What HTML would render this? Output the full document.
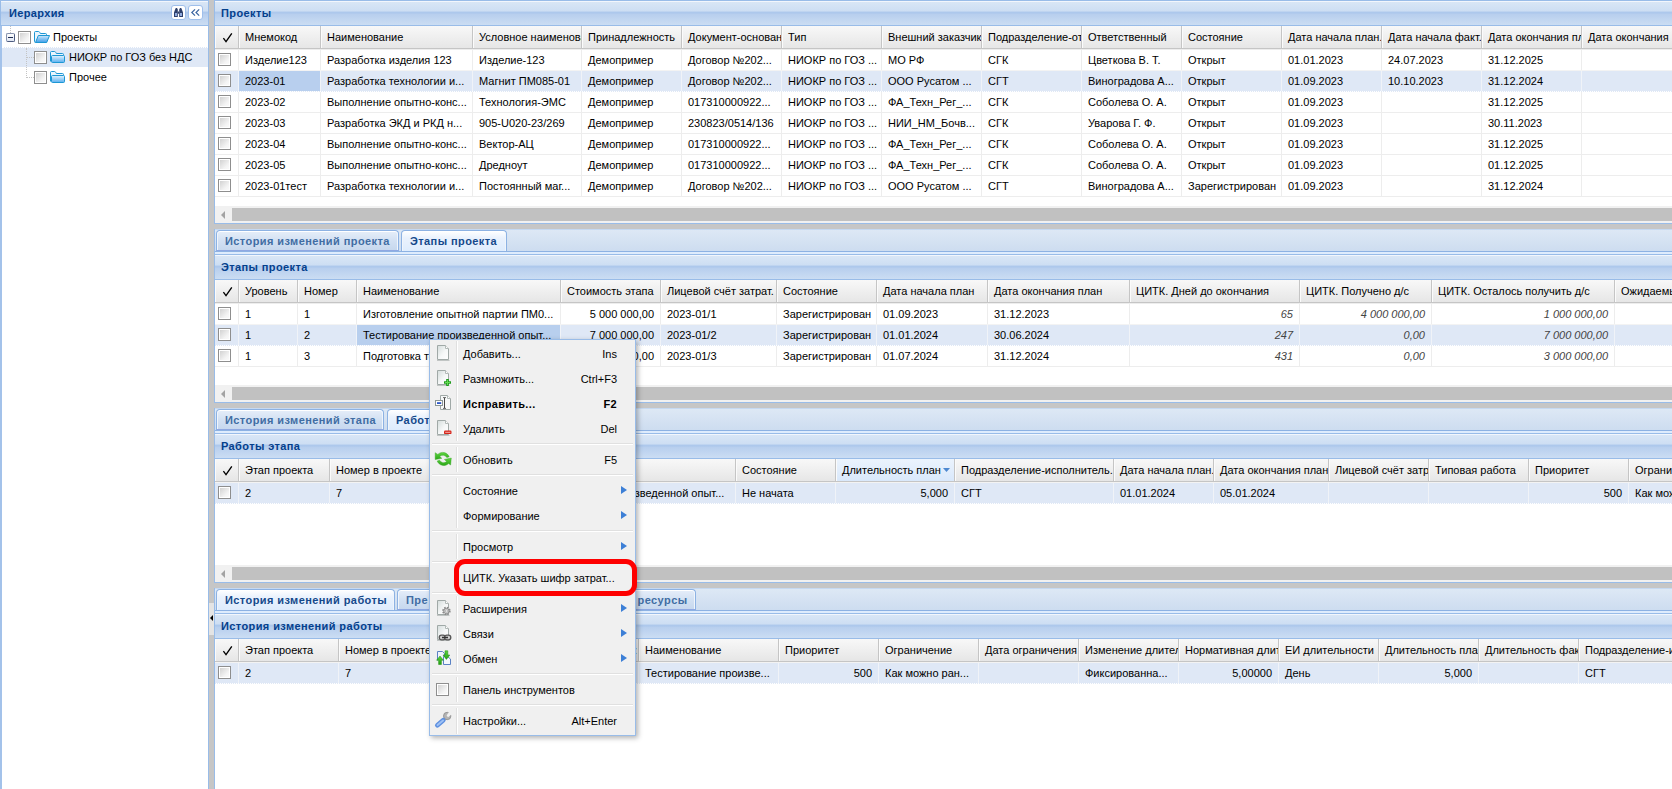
<!DOCTYPE html>
<html><head><meta charset="utf-8"><title>UI</title>
<style>
*{box-sizing:border-box;margin:0;padding:0}
html,body{width:1672px;height:789px;overflow:hidden;background:#fff}
body{font-family:"Liberation Sans",sans-serif;font-size:11px;color:#000;position:relative;line-height:13px}
.abs{position:absolute}
svg{position:absolute;overflow:visible}
.ph{position:absolute;height:26px;border:1px solid #99bce8;background:linear-gradient(#dae7f6 0,#cddef3 42%,#adc8ec 46%,#adc8ec 50%,#b8cfee 56%,#cbddf3 100%);box-shadow:inset 0 1px 0 #f2f6fc}
.ph span{position:absolute;left:6px;top:6px;font-weight:bold;color:#04408c;letter-spacing:.4px;white-space:nowrap}
.gh{position:absolute;height:23px;background:linear-gradient(#f8f8f8,#e6e6e6);border-bottom:1px solid #c5c5c5;overflow:hidden;white-space:nowrap}
.gh i{position:absolute;top:0;height:22px;border-right:1px solid #c5c5c5;border-left:1px solid #fbfbfb;font-style:normal;padding:5px 0 0 5px;overflow:hidden;white-space:nowrap}
.gh i.srt{background:linear-gradient(#ebf3fd,#d9e8fb)}
.gh svg{left:7px;top:7px}
.row{position:absolute;height:21px;border-top:1px solid #ededed;background:#fff;overflow:hidden}
.row.sel{background:#dfe8f6;border-top-color:#f3f3f3}
.row.aft{border-top:1px dotted #dfe8f6}
.row b{position:absolute;top:0;height:20px;font-weight:normal;padding:4px 6px 0 6px;overflow:hidden;white-space:nowrap;border-right:1px solid #ededed}
.row.sel b{border-right-color:#f0f3f8}
.row b.r{text-align:right}
.row b.it{font-style:italic;color:#444}
.row b.foc{background:#b8cfee}
.cb{position:absolute;left:3px;top:3px;width:13px;height:13px;border:1px solid #8e8e8e;background:#fff}
.cb:after{content:"";position:absolute;left:1px;top:1px;width:9px;height:9px;background:linear-gradient(135deg,#d2d2d2,#f4f4f4 70%,#fafafa)}
.sb{position:absolute;height:17px;background:#f1f1f1}
.sb u{position:absolute;left:17px;top:2px;height:13px;right:0;background:#c1c1c1}
.sb s{position:absolute;left:6px;top:5px;width:0;height:0;border:4px solid transparent;border-right:4.5px solid #a3a3a3;border-left:0}
.tb{position:absolute;height:26px;border:1px solid #99bce8;border-left:0;border-right:0;border-top-color:#c5d9f2;background:linear-gradient(#dde8f5,#cbdbef)}
.tb .strip{position:absolute;left:0;right:0;bottom:0;height:3px;background:#deecfd;border-top:1px solid #8db2e3}
.tab{position:absolute;top:0;height:21px;border:1px solid #8db2e3;border-bottom-color:#8fa8e2;border-radius:4px 4px 0 0;background:linear-gradient(#e6eef9,#d3e1f3 50%,#c7d8ee);color:#416da3;font-weight:bold;letter-spacing:.42px;padding:4px 0 0 8px;white-space:nowrap;overflow:hidden;box-shadow:inset 0 1px 0 #fff,inset 1px 0 0 #f0f5fb,inset -1px 0 0 #f0f5fb}
.tab.act{background:linear-gradient(#fff,#eaf2fd 35%,#deecfd);color:#15498b;border-bottom:0;z-index:2}
.hs{position:absolute;height:5px;background:#c6c6c6}
/* menu */
.menu{position:absolute;left:429px;top:339px;width:207px;height:397px;background:#f0f0f0;border:1px solid #99bce8;box-shadow:2px 2px 5px rgba(0,0,0,.3);z-index:10}
.menu .vl{position:absolute;left:26px;top:1px;bottom:1px;width:2px;border-left:1px solid #e0e0e0;background:#fff}
.mi{position:absolute;left:1px;width:203px;height:25px}
.mi span{position:absolute;left:32px;top:7px;white-space:nowrap}
.mi em{position:absolute;right:17px;top:7px;font-style:normal;white-space:nowrap}
.mi.b span,.mi.b em{font-weight:bold;letter-spacing:.35px}
.mi .ar{position:absolute;left:190px;top:8px;width:0;height:0;border:4.5px solid transparent;border-left:6px solid #3d7fd6;border-right:0}
.ms{position:absolute;left:1px;width:203px;height:6px;background:#f0f0f0}
.ms:after{content:"";position:absolute;left:1px;right:1px;top:2px;height:1px;border-top:1px solid #e0e0e0;background:#fff}
</style></head>
<body>
<div class="abs" style="left:0;top:0;width:209px;height:800px;border:1px solid #99bce8;border-left:2px solid #a3c2ea;border-top:0;background:#fff"></div>
<div class="ph" style="left:0;top:0;width:209px"><span style="left:8px;letter-spacing:.35px">Иерархия</span></div>
<div class="abs" style="left:171px;top:5px;width:15px;height:15px;border:1px solid #9fbfeb;border-radius:3px;background:#fff"><svg style="left:2px;top:2px" width="9" height="9" viewBox="0 0 9 9"><path d="M0 9 V4.5 L1.2 1.2 L1.8 0 H3 L3.8 1.5 V9 Z M5.2 9 V1.5 L6 0 H7.2 L7.8 1.2 L9 4.5 V9 Z" fill="#2d3f6b"/><path d="M1 5 H3 V8 H1 Z M6 5 H8 V8 H6 Z" fill="#8fa9dc"/><rect x="3.8" y="3.5" width="1.4" height="2.2" fill="#2d3f6b"/></svg></div>
<div class="abs" style="left:188px;top:5px;width:15px;height:15px;border:1px solid #9fbfeb;border-radius:3px;background:#fff"><svg style="left:2px;top:3px" width="9" height="7" viewBox="0 0 9 7"><path d="M4 0.3 L0.8 3.5 L4 6.7 M8.2 0.3 L5 3.5 L8.2 6.7" fill="none" stroke="#3a64a0" stroke-width="1.2"/></svg></div>
<div class="abs" style="left:2px;top:47px;width:206px;height:20px;background:#dfe8f6;border-top:1px dotted #fff"></div>
<div class="abs" style="left:10px;top:26px;width:1px;height:7px;border-left:1px dotted #c4c4c4"></div>
<div class="abs" style="left:26px;top:48px;width:1px;height:30px;border-left:1px dotted #c4c4c4"></div>
<div class="abs" style="left:27px;top:57px;width:7px;height:1px;border-top:1px dotted #c4c4c4"></div>
<div class="abs" style="left:27px;top:77px;width:7px;height:1px;border-top:1px dotted #c4c4c4"></div>
<div class="abs" style="left:6px;top:33px;width:9px;height:9px;border:1px solid #8592ad;border-right-color:#4d5c80;border-bottom-color:#4d5c80;border-radius:2px;background:linear-gradient(#fff,#dfe6f2)"><div class="abs" style="left:1px;top:3px;width:5px;height:1px;background:#1f2c52"></div></div>
<div class="cb" style="left:18px;top:31px"></div><svg style="left:34px;top:29px" width="16" height="16" viewBox="0 0 16 16"><defs><linearGradient id="fo" x1="0" y1="0" x2="0" y2="1"><stop offset="0" stop-color="#cfe8fb"/><stop offset="1" stop-color="#3d9de9"/></linearGradient></defs><path d="M1.5 13.5 Q0.5 13.5 0.5 12.5 V3.5 Q0.5 2.5 1.5 2.5 H4.5 Q5.3 2.5 5.8 3.5 L6.3 4.5 H11.5 Q12.5 4.5 12.5 5.5 V6.5" fill="#eaf5fd" stroke="#1c97d4"/><path d="M1.5 13.5 L4.3 6.5 H15.5 L12.7 13.5 Z" fill="url(#fo)" stroke="#1c97d4" stroke-linejoin="round"/></svg><div class="abs" style="left:53px;top:31px">Проекты</div>
<div class="cb" style="left:34px;top:51px"></div><svg style="left:50px;top:49px" width="16" height="16" viewBox="0 0 16 16"><defs><linearGradient id="f1" x1="0" y1="0" x2="0" y2="1"><stop offset="0" stop-color="#e6f3fd"/><stop offset="1" stop-color="#58aff0"/></linearGradient></defs><path d="M0.5 12.5 V3.5 Q0.5 2.5 1.5 2.5 H4.5 Q5.3 2.5 5.8 3.5 L6.3 4.5 H12.5 Q13.5 4.5 13.5 5.5 V6.5" fill="#eaf5fd" stroke="#1c97d4"/><rect x="1.5" y="6.5" width="13" height="7" rx="1" fill="url(#f1)" stroke="#1c97d4"/></svg><div class="abs" style="left:69px;top:51px">НИОКР по ГОЗ без НДС</div>
<div class="cb" style="left:34px;top:71px"></div><svg style="left:50px;top:69px" width="16" height="16" viewBox="0 0 16 16"><defs><linearGradient id="f2" x1="0" y1="0" x2="0" y2="1"><stop offset="0" stop-color="#e6f3fd"/><stop offset="1" stop-color="#58aff0"/></linearGradient></defs><path d="M0.5 12.5 V3.5 Q0.5 2.5 1.5 2.5 H4.5 Q5.3 2.5 5.8 3.5 L6.3 4.5 H12.5 Q13.5 4.5 13.5 5.5 V6.5" fill="#eaf5fd" stroke="#1c97d4"/><rect x="1.5" y="6.5" width="13" height="7" rx="1" fill="url(#f2)" stroke="#1c97d4"/></svg><div class="abs" style="left:69px;top:71px">Прочее</div>
<div class="abs" style="left:209px;top:0;width:5px;height:789px;background:#c6c6c6"></div>
<div class="abs" style="left:209px;top:603px;width:5px;height:32px;background:#e4e4e4"></div>
<div class="abs" style="left:210px;top:615px;width:0;height:0;border:3px solid transparent;border-right:3px solid #000;border-left:0"></div>
<div class="abs" style="left:214px;top:0;width:1px;height:789px;background:#99bce8"></div>
<div class="ph" style="left:214px;top:0px;width:1459px"><span>Проекты</span></div>
<div class="gh" style="left:215px;top:26px;width:1457px"><i class="" style="left:0px;width:24px"><svg width="10" height="10" viewBox="0 0 10 10"><path d="M0.4 5.2 L3 8.6 L8.8 0.4" fill="none" stroke="#000" stroke-width="1.35"/></svg></i><i class="" style="left:24px;width:82px">Мнемокод</i><i class="" style="left:106px;width:152px">Наименование</i><i class="" style="left:258px;width:109px">Условное наименование</i><i class="" style="left:367px;width:100px">Принадлежность</i><i class="" style="left:467px;width:100px">Документ-основание</i><i class="" style="left:567px;width:100px">Тип</i><i class="" style="left:667px;width:100px">Внешний заказчик</i><i class="" style="left:767px;width:100px">Подразделение-ответственный</i><i class="" style="left:867px;width:100px">Ответственный</i><i class="" style="left:967px;width:100px">Состояние</i><i class="" style="left:1067px;width:100px">Дата начала план.</i><i class="" style="left:1167px;width:100px">Дата начала факт.</i><i class="" style="left:1267px;width:100px">Дата окончания план.</i><i class="" style="left:1367px;width:100px">Дата окончания</i></div>
<div class="row " style="left:215px;top:49px;width:1457px"><span class="cb"></span><b style="left:0px;width:24px"></b><b class="" style="left:24px;width:82px">Изделие123</b><b class="" style="left:106px;width:152px">Разработка изделия 123</b><b class="" style="left:258px;width:109px">Изделие-123</b><b class="" style="left:367px;width:100px">Демопример</b><b class="" style="left:467px;width:100px">Договор №202...</b><b class="" style="left:567px;width:100px">НИОКР по ГОЗ ...</b><b class="" style="left:667px;width:100px">МО РФ</b><b class="" style="left:767px;width:100px">СГК</b><b class="" style="left:867px;width:100px">Цветкова В. Т.</b><b class="" style="left:967px;width:100px">Открыт</b><b class="" style="left:1067px;width:100px">01.01.2023</b><b class="" style="left:1167px;width:100px">24.07.2023</b><b class="" style="left:1267px;width:100px">31.12.2025</b><b class="" style="left:1367px;width:100px"></b></div>
<div class="row sel" style="left:215px;top:70px;width:1457px"><span class="cb"></span><b style="left:0px;width:24px"></b><b class="foc" style="left:24px;width:82px">2023-01</b><b class="" style="left:106px;width:152px">Разработка технологии и...</b><b class="" style="left:258px;width:109px">Магнит ПМ085-01</b><b class="" style="left:367px;width:100px">Демопример</b><b class="" style="left:467px;width:100px">Договор №202...</b><b class="" style="left:567px;width:100px">НИОКР по ГОЗ ...</b><b class="" style="left:667px;width:100px">ООО Русатом ...</b><b class="" style="left:767px;width:100px">СГТ</b><b class="" style="left:867px;width:100px">Виноградова А...</b><b class="" style="left:967px;width:100px">Открыт</b><b class="" style="left:1067px;width:100px">01.09.2023</b><b class="" style="left:1167px;width:100px">10.10.2023</b><b class="" style="left:1267px;width:100px">31.12.2024</b><b class="" style="left:1367px;width:100px"></b></div>
<div class="row aft" style="left:215px;top:91px;width:1457px"><span class="cb"></span><b style="left:0px;width:24px"></b><b class="" style="left:24px;width:82px">2023-02</b><b class="" style="left:106px;width:152px">Выполнение опытно-конс...</b><b class="" style="left:258px;width:109px">Технология-ЭМС</b><b class="" style="left:367px;width:100px">Демопример</b><b class="" style="left:467px;width:100px">017310000922...</b><b class="" style="left:567px;width:100px">НИОКР по ГОЗ ...</b><b class="" style="left:667px;width:100px">ФА_Техн_Рег_...</b><b class="" style="left:767px;width:100px">СГК</b><b class="" style="left:867px;width:100px">Соболева О. А.</b><b class="" style="left:967px;width:100px">Открыт</b><b class="" style="left:1067px;width:100px">01.09.2023</b><b class="" style="left:1167px;width:100px"></b><b class="" style="left:1267px;width:100px">31.12.2025</b><b class="" style="left:1367px;width:100px"></b></div>
<div class="row " style="left:215px;top:112px;width:1457px"><span class="cb"></span><b style="left:0px;width:24px"></b><b class="" style="left:24px;width:82px">2023-03</b><b class="" style="left:106px;width:152px">Разработка ЭКД и РКД н...</b><b class="" style="left:258px;width:109px">905-U020-23/269</b><b class="" style="left:367px;width:100px">Демопример</b><b class="" style="left:467px;width:100px">230823/0514/136</b><b class="" style="left:567px;width:100px">НИОКР по ГОЗ ...</b><b class="" style="left:667px;width:100px">НИИ_НМ_Бочв...</b><b class="" style="left:767px;width:100px">СГК</b><b class="" style="left:867px;width:100px">Уварова Г. Ф.</b><b class="" style="left:967px;width:100px">Открыт</b><b class="" style="left:1067px;width:100px">01.09.2023</b><b class="" style="left:1167px;width:100px"></b><b class="" style="left:1267px;width:100px">30.11.2023</b><b class="" style="left:1367px;width:100px"></b></div>
<div class="row " style="left:215px;top:133px;width:1457px"><span class="cb"></span><b style="left:0px;width:24px"></b><b class="" style="left:24px;width:82px">2023-04</b><b class="" style="left:106px;width:152px">Выполнение опытно-конс...</b><b class="" style="left:258px;width:109px">Вектор-АЦ</b><b class="" style="left:367px;width:100px">Демопример</b><b class="" style="left:467px;width:100px">017310000922...</b><b class="" style="left:567px;width:100px">НИОКР по ГОЗ ...</b><b class="" style="left:667px;width:100px">ФА_Техн_Рег_...</b><b class="" style="left:767px;width:100px">СГК</b><b class="" style="left:867px;width:100px">Соболева О. А.</b><b class="" style="left:967px;width:100px">Открыт</b><b class="" style="left:1067px;width:100px">01.09.2023</b><b class="" style="left:1167px;width:100px"></b><b class="" style="left:1267px;width:100px">31.12.2025</b><b class="" style="left:1367px;width:100px"></b></div>
<div class="row " style="left:215px;top:154px;width:1457px"><span class="cb"></span><b style="left:0px;width:24px"></b><b class="" style="left:24px;width:82px">2023-05</b><b class="" style="left:106px;width:152px">Выполнение опытно-конс...</b><b class="" style="left:258px;width:109px">Дредноут</b><b class="" style="left:367px;width:100px">Демопример</b><b class="" style="left:467px;width:100px">017310000922...</b><b class="" style="left:567px;width:100px">НИОКР по ГОЗ ...</b><b class="" style="left:667px;width:100px">ФА_Техн_Рег_...</b><b class="" style="left:767px;width:100px">СГК</b><b class="" style="left:867px;width:100px">Соболева О. А.</b><b class="" style="left:967px;width:100px">Открыт</b><b class="" style="left:1067px;width:100px">01.09.2023</b><b class="" style="left:1167px;width:100px"></b><b class="" style="left:1267px;width:100px">01.12.2025</b><b class="" style="left:1367px;width:100px"></b></div>
<div class="row " style="left:215px;top:175px;width:1457px"><span class="cb"></span><b style="left:0px;width:24px"></b><b class="" style="left:24px;width:82px">2023-01тест</b><b class="" style="left:106px;width:152px">Разработка технологии и...</b><b class="" style="left:258px;width:109px">Постоянный маг...</b><b class="" style="left:367px;width:100px">Демопример</b><b class="" style="left:467px;width:100px">Договор №202...</b><b class="" style="left:567px;width:100px">НИОКР по ГОЗ ...</b><b class="" style="left:667px;width:100px">ООО Русатом ...</b><b class="" style="left:767px;width:100px">СГТ</b><b class="" style="left:867px;width:100px">Виноградова А...</b><b class="" style="left:967px;width:100px">Зарегистрирован</b><b class="" style="left:1067px;width:100px">01.09.2023</b><b class="" style="left:1167px;width:100px"></b><b class="" style="left:1267px;width:100px">31.12.2024</b><b class="" style="left:1367px;width:100px"></b></div>
<div class="abs" style="left:215px;top:196px;width:1457px;height:1px;background:#ededed"></div>
<div class="sb" style="left:215px;top:206px;width:1457px"><s></s><u></u></div>
<div class="abs" style="left:214px;top:223px;width:1458px;height:1px;background:#99bce8"></div>
<div class="hs" style="left:214px;top:224px;width:1458px"></div>
<div class="tb" style="left:215px;top:229px;width:1457px"><div class="strip"></div><div class="tab" style="left:1px;width:183px">История изменений проекта</div><div class="tab act" style="left:186px;width:106px">Этапы проекта</div></div>
<div class="ph" style="left:214px;top:254px;width:1459px"><span>Этапы проекта</span></div>
<div class="gh" style="left:215px;top:280px;width:1457px"><i class="" style="left:0px;width:24px"><svg width="10" height="10" viewBox="0 0 10 10"><path d="M0.4 5.2 L3 8.6 L8.8 0.4" fill="none" stroke="#000" stroke-width="1.35"/></svg></i><i class="" style="left:24px;width:59px">Уровень</i><i class="" style="left:83px;width:59px">Номер</i><i class="" style="left:142px;width:204px">Наименование</i><i class="" style="left:346px;width:100px">Стоимость этапа</i><i class="" style="left:446px;width:116px">Лицевой счёт затрат.</i><i class="" style="left:562px;width:100px">Состояние</i><i class="" style="left:662px;width:111px">Дата начала план</i><i class="" style="left:773px;width:142px">Дата окончания план</i><i class="" style="left:915px;width:170px">ЦИТК. Дней до окончания</i><i class="" style="left:1085px;width:132px">ЦИТК. Получено д/с</i><i class="" style="left:1217px;width:183px">ЦИТК. Осталось получить д/с</i><i class="" style="left:1400px;width:100px">Ожидаемые</i></div>
<div class="row " style="left:215px;top:303px;width:1457px"><span class="cb"></span><b style="left:0px;width:24px"></b><b class="" style="left:24px;width:59px">1</b><b class="" style="left:83px;width:59px">1</b><b class="" style="left:142px;width:204px">Изготовление опытной партии ПМ0...</b><b class="r" style="left:346px;width:100px">5 000 000,00</b><b class="" style="left:446px;width:116px">2023-01/1</b><b class="" style="left:562px;width:100px">Зарегистрирован</b><b class="" style="left:662px;width:111px">01.09.2023</b><b class="" style="left:773px;width:142px">31.12.2023</b><b class="r it" style="left:915px;width:170px">65</b><b class="r it" style="left:1085px;width:132px">4 000 000,00</b><b class="r it" style="left:1217px;width:183px">1 000 000,00</b><b class="" style="left:1400px;width:100px"></b></div>
<div class="row sel" style="left:215px;top:324px;width:1457px"><span class="cb"></span><b style="left:0px;width:24px"></b><b class="" style="left:24px;width:59px">1</b><b class="" style="left:83px;width:59px">2</b><b class="foc" style="left:142px;width:204px">Тестирование произведенной опыт...</b><b class="r" style="left:346px;width:100px">7 000 000,00</b><b class="" style="left:446px;width:116px">2023-01/2</b><b class="" style="left:562px;width:100px">Зарегистрирован</b><b class="" style="left:662px;width:111px">01.01.2024</b><b class="" style="left:773px;width:142px">30.06.2024</b><b class="r it" style="left:915px;width:170px">247</b><b class="r it" style="left:1085px;width:132px">0,00</b><b class="r it" style="left:1217px;width:183px">7 000 000,00</b><b class="" style="left:1400px;width:100px"></b></div>
<div class="row aft" style="left:215px;top:345px;width:1457px"><span class="cb"></span><b style="left:0px;width:24px"></b><b class="" style="left:24px;width:59px">1</b><b class="" style="left:83px;width:59px">3</b><b class="" style="left:142px;width:204px">Подготовка технической документа...</b><b class="r" style="left:346px;width:100px">3 000 000,00</b><b class="" style="left:446px;width:116px">2023-01/3</b><b class="" style="left:562px;width:100px">Зарегистрирован</b><b class="" style="left:662px;width:111px">01.07.2024</b><b class="" style="left:773px;width:142px">31.12.2024</b><b class="r it" style="left:915px;width:170px">431</b><b class="r it" style="left:1085px;width:132px">0,00</b><b class="r it" style="left:1217px;width:183px">3 000 000,00</b><b class="" style="left:1400px;width:100px"></b></div>
<div class="abs" style="left:215px;top:366px;width:1457px;height:1px;background:#ededed"></div>
<div class="sb" style="left:215px;top:385px;width:1457px"><s></s><u></u></div>
<div class="abs" style="left:214px;top:402px;width:1458px;height:1px;background:#99bce8"></div>
<div class="hs" style="left:214px;top:403px;width:1458px"></div>
<div class="tb" style="left:215px;top:408px;width:1457px"><div class="strip"></div><div class="tab" style="left:1px;width:168px">История изменений этапа</div><div class="tab act" style="left:172px;width:100px">Работы этапа</div></div>
<div class="ph" style="left:214px;top:433px;width:1459px"><span>Работы этапа</span></div>
<div class="gh" style="left:215px;top:459px;width:1457px"><i class="" style="left:0px;width:24px"><svg width="10" height="10" viewBox="0 0 10 10"><path d="M0.4 5.2 L3 8.6 L8.8 0.4" fill="none" stroke="#000" stroke-width="1.35"/></svg></i><i class="" style="left:24px;width:91px">Этап проекта</i><i class="" style="left:115px;width:100px">Номер в проекте</i><i class="" style="left:215px;width:100px"></i><i class="" style="left:315px;width:206px">Наименование</i><i class="" style="left:521px;width:100px">Состояние</i><i class="srt" style="left:621px;width:119px">Длительность план<svg style="left:106px;top:9px" width="7" height="4" viewBox="0 0 7 4"><path d="M0 0 H7 L3.5 4 Z" fill="#4d88d0"/></svg></i><i class="" style="left:740px;width:159px">Подразделение-исполнитель..</i><i class="" style="left:899px;width:100px">Дата начала план.</i><i class="" style="left:999px;width:115px">Дата окончания план</i><i class="" style="left:1114px;width:100px">Лицевой счёт затрат</i><i class="" style="left:1214px;width:100px">Типовая работа</i><i class="" style="left:1314px;width:100px">Приоритет</i><i class="" style="left:1414px;width:100px">Ограничение</i></div>
<div class="row sel" style="left:215px;top:482px;width:1457px"><span class="cb"></span><b style="left:0px;width:24px"></b><b class="" style="left:24px;width:91px">2</b><b class="" style="left:115px;width:100px">7</b><b class="" style="left:215px;width:100px"></b><b class="" style="left:315px;width:206px">Тестирование произведенной опыт...</b><b class="" style="left:521px;width:100px">Не начата</b><b class="r" style="left:621px;width:119px">5,000</b><b class="" style="left:740px;width:159px">СГТ</b><b class="" style="left:899px;width:100px">01.01.2024</b><b class="" style="left:999px;width:115px">05.01.2024</b><b class="" style="left:1114px;width:100px"></b><b class="" style="left:1214px;width:100px"></b><b class="r" style="left:1314px;width:100px">500</b><b class="" style="left:1414px;width:100px">Как можно</b></div>
<div class="abs" style="left:215px;top:503px;width:1457px;height:1px;border-top:1px dotted #dfe8f6"></div>
<div class="sb" style="left:215px;top:565px;width:1457px"><s></s><u></u></div>
<div class="abs" style="left:214px;top:582px;width:1458px;height:1px;background:#99bce8"></div>
<div class="hs" style="left:214px;top:583px;width:1458px"></div>
<div class="tb" style="left:215px;top:588px;width:1457px"><div class="strip"></div><div class="tab act" style="left:1px;width:179px">История изменений работы</div><div class="tab" style="left:182px;width:120px">Пре</div><div class="tab" style="left:352px;width:129px">Трудовые ресурсы</div></div>
<div class="ph" style="left:214px;top:613px;width:1459px"><span>История изменений работы</span></div>
<div class="gh" style="left:215px;top:639px;width:1457px"><i class="" style="left:0px;width:24px"><svg width="10" height="10" viewBox="0 0 10 10"><path d="M0.4 5.2 L3 8.6 L8.8 0.4" fill="none" stroke="#000" stroke-width="1.35"/></svg></i><i class="" style="left:24px;width:100px">Этап проекта</i><i class="" style="left:124px;width:100px">Номер в проекте</i><i class="" style="left:224px;width:200px"></i><i class="" style="left:424px;width:140px">Наименование</i><i class="" style="left:564px;width:100px">Приоритет</i><i class="" style="left:664px;width:100px">Ограничение</i><i class="" style="left:764px;width:100px">Дата ограничения</i><i class="" style="left:864px;width:100px">Изменение длительности</i><i class="" style="left:964px;width:100px">Нормативная длительность</i><i class="" style="left:1064px;width:100px">ЕИ длительности</i><i class="" style="left:1164px;width:100px">Длительность план</i><i class="" style="left:1264px;width:100px">Длительность факт</i><i class="" style="left:1364px;width:100px">Подразделение-исполнитель</i></div>
<div class="abs" style="left:634px;top:644px">:</div>
<div class="row sel" style="left:215px;top:662px;width:1457px"><span class="cb"></span><b style="left:0px;width:24px"></b><b class="" style="left:24px;width:100px">2</b><b class="" style="left:124px;width:100px">7</b><b class="" style="left:224px;width:200px"></b><b class="" style="left:424px;width:140px">Тестирование произве...</b><b class="r" style="left:564px;width:100px">500</b><b class="" style="left:664px;width:100px">Как можно ран...</b><b class="" style="left:764px;width:100px"></b><b class="" style="left:864px;width:100px">Фиксированна...</b><b class="r" style="left:964px;width:100px">5,00000</b><b class="" style="left:1064px;width:100px">День</b><b class="r" style="left:1164px;width:100px">5,000</b><b class="" style="left:1264px;width:100px"></b><b class="" style="left:1364px;width:100px">СГТ</b></div>
<div class="abs" style="left:215px;top:683px;width:1457px;height:1px;border-top:1px dotted #dfe8f6"></div>
<div class="menu"><div class="vl"></div><div class="mi " style="top:1px"><svg style="left:6px;top:4px" width="16" height="16" viewBox="0 0 16 16"><defs><linearGradient id="pg1" x1="0" y1="0" x2="1" y2="1"><stop offset="0" stop-color="#d4dcdb"/><stop offset=".55" stop-color="#f6f8f8"/><stop offset="1" stop-color="#fff"/></linearGradient></defs><path d="M0 15.5 H12.5" stroke="#9aa3a1" stroke-opacity=".55" stroke-width="1"/><path d="M0.5 0.5 H8.5 L11.5 3.5 V14.5 H0.5 Z" fill="url(#pg1)" stroke="#a0a9a7"/><path d="M8.5 0.5 V3.5 H11.5" fill="#fff" stroke="#b3bab8"/></svg><span>Добавить...</span><em>Ins</em></div><div class="mi " style="top:26px"><svg style="left:6px;top:4px" width="16" height="16" viewBox="0 0 16 16"><defs><linearGradient id="pg2" x1="0" y1="0" x2="1" y2="1"><stop offset="0" stop-color="#d4dcdb"/><stop offset=".55" stop-color="#f6f8f8"/><stop offset="1" stop-color="#fff"/></linearGradient></defs><path d="M0 15.5 H12.5" stroke="#9aa3a1" stroke-opacity=".55" stroke-width="1"/><path d="M0.5 0.5 H8.5 L11.5 3.5 V14.5 H0.5 Z" fill="url(#pg2)" stroke="#a0a9a7"/><path d="M8.5 0.5 V3.5 H11.5" fill="#fff" stroke="#b3bab8"/><path d="M10.5 9 V16 M7 12.5 H14" stroke="#1f9a1c" stroke-width="2.6"/><path d="M10.5 10 V15 M8 12.5 H13" stroke="#63dc52" stroke-width="1"/></svg><span>Размножить...</span><em>Ctrl+F3</em></div><div class="mi b" style="top:51px"><svg style="left:4px;top:4px" width="18" height="16" viewBox="0 0 18 16"><path d="M5.5 0.5 H12.5 L15.5 3.5 V14.5 H5.5 Z" fill="#f7f9f9" stroke="#a0a9a7"/><path d="M12.5 0.5 V3.5 H15.5" fill="#fff" stroke="#b3bab8"/><rect x="0.5" y="5.5" width="7" height="5" fill="#fff" stroke="#8b9695"/><rect x="2" y="7.2" width="4.2" height="1.8" fill="#2a55c8"/><path d="M9.5 3 V13" stroke="#333" stroke-width=".9"/><path d="M8 2.6 H11 M8 13.4 H11" stroke="#444" stroke-width=".8"/></svg><span>Исправить...</span><em>F2</em></div><div class="mi " style="top:76px"><svg style="left:6px;top:4px" width="16" height="16" viewBox="0 0 16 16"><defs><linearGradient id="pg4" x1="0" y1="0" x2="1" y2="1"><stop offset="0" stop-color="#d4dcdb"/><stop offset=".55" stop-color="#f6f8f8"/><stop offset="1" stop-color="#fff"/></linearGradient></defs><path d="M0 15.5 H12.5" stroke="#9aa3a1" stroke-opacity=".55" stroke-width="1"/><path d="M0.5 0.5 H8.5 L11.5 3.5 V14.5 H0.5 Z" fill="url(#pg4)" stroke="#a0a9a7"/><path d="M8.5 0.5 V3.5 H11.5" fill="#fff" stroke="#b3bab8"/><rect x="7" y="10.5" width="7.5" height="3.6" rx="1.2" fill="#d6231a"/><rect x="8.2" y="11.8" width="5.2" height="1" fill="#f6b0a8"/></svg><span>Удалить</span><em>Del</em></div><div class="ms" style="top:101px"></div><div class="mi " style="top:107px"><svg style="left:4px;top:5px" width="17" height="15" viewBox="0 0 17 15"><defs><linearGradient id="rg" x1="0" y1="0" x2="0" y2="1"><stop offset="0" stop-color="#5fd641"/><stop offset="1" stop-color="#2aa516"/></linearGradient></defs><path d="M14.2 4.8 A7 7 0 0 0 2.8 2.4 L0.2 0.7 L0.2 7.6 L6.8 6.3 L4.7 4.4 A4.6 4.6 0 0 1 11.8 5.6 Z" fill="url(#rg)" stroke="#2c9f1a" stroke-width=".4"/><path d="M2.2 9 A7 7 0 0 0 13.6 11.6 L15.6 13 L16.3 6 L9.4 7.4 L11.7 9.6 A4.6 4.6 0 0 1 4.6 8.2 Z" fill="url(#rg)" stroke="#2c9f1a" stroke-width=".4"/></svg><span>Обновить</span><em>F5</em></div><div class="ms" style="top:132px"></div><div class="mi " style="top:138px"><span>Состояние</span><div class="ar"></div></div><div class="mi " style="top:163px"><span>Формирование</span><div class="ar"></div></div><div class="ms" style="top:188px"></div><div class="mi " style="top:194px"><span>Просмотр</span><div class="ar"></div></div><div class="ms" style="top:219px"></div><div class="mi " style="top:225px"><span>ЦИТК. Указать шифр затрат...</span></div><div class="ms" style="top:250px"></div><div class="mi " style="top:256px"><svg style="left:6px;top:4px" width="16" height="16" viewBox="0 0 16 16"><defs><linearGradient id="pg10" x1="0" y1="0" x2="1" y2="1"><stop offset="0" stop-color="#d4dcdb"/><stop offset=".55" stop-color="#f6f8f8"/><stop offset="1" stop-color="#fff"/></linearGradient></defs><path d="M0 15.5 H12.5" stroke="#9aa3a1" stroke-opacity=".55" stroke-width="1"/><path d="M0.5 0.5 H8.5 L11.5 3.5 V14.5 H0.5 Z" fill="url(#pg10)" stroke="#a0a9a7"/><path d="M8.5 0.5 V3.5 H11.5" fill="#fff" stroke="#b3bab8"/><circle cx="9.4" cy="11" r="3.3" fill="#e8e8e8" stroke="#8a8a8a" stroke-width="1.9" stroke-dasharray="1.5 1.1"/><circle cx="9.4" cy="11" r="2.6" fill="#dcdcdc" stroke="#8a8a8a" stroke-width=".9"/><circle cx="9.4" cy="11" r="1.1" fill="#fff" stroke="#888" stroke-width=".5"/></svg><span>Расширения</span><div class="ar"></div></div><div class="mi " style="top:281px"><svg style="left:6px;top:4px" width="16" height="16" viewBox="0 0 16 16"><defs><linearGradient id="pg11" x1="0" y1="0" x2="1" y2="1"><stop offset="0" stop-color="#d4dcdb"/><stop offset=".55" stop-color="#f6f8f8"/><stop offset="1" stop-color="#fff"/></linearGradient></defs><path d="M0 15.5 H12.5" stroke="#9aa3a1" stroke-opacity=".55" stroke-width="1"/><path d="M0.5 0.5 H8.5 L11.5 3.5 V14.5 H0.5 Z" fill="url(#pg11)" stroke="#a0a9a7"/><path d="M8.5 0.5 V3.5 H11.5" fill="#fff" stroke="#b3bab8"/><rect x="2.2" y="10.2" width="6.2" height="4.6" rx="2.3" fill="#cfcfcf" stroke="#555" stroke-width="1.3"/><rect x="7.6" y="10.2" width="6.2" height="4.6" rx="2.3" fill="#cfcfcf" stroke="#555" stroke-width="1.3"/><path d="M5 12.5 H11" stroke="#333" stroke-width="1.5"/></svg><span>Связи</span><div class="ar"></div></div><div class="mi " style="top:306px"><svg style="left:5px;top:4px" width="16" height="16" viewBox="0 0 16 16"><defs><linearGradient id="xg" x1="0" y1="0" x2="0" y2="1"><stop offset="0" stop-color="#5fd641"/><stop offset="1" stop-color="#22a012"/></linearGradient></defs><path d="M1.5 10.5 V1.5 H6.5 L8.5 3.5 V7" fill="#eef3fb" stroke="#5b82c4"/><path d="M7.5 14.5 V6.5 H11.5 L14.5 9 V14.5 Z" fill="#f4f8fd" stroke="#5b82c4"/><path d="M2.6 14.5 V10.2 H0.6 L4 6 L7.4 10.2 H5.4 V14.5 Z" fill="url(#xg)" stroke="#1f8f12" stroke-width=".5"/><path d="M9 0.8 V5 H7 L10.4 9.4 L13.8 5 H11.8 V0.8 Z" fill="url(#xg)" stroke="#1f8f12" stroke-width=".5"/></svg><span>Обмен</span><div class="ar"></div></div><div class="ms" style="top:331px"></div><div class="mi " style="top:337px"><span class="cb" style="left:5px;top:6px"></span><span>Панель инструментов</span></div><div class="ms" style="top:362px"></div><div class="mi " style="top:368px"><svg style="left:4px;top:3px" width="17" height="17" viewBox="0 0 17 17"><path d="M8.6 8.9 L10.4 7" stroke="#9a9a9a" stroke-width="2.8"/><circle cx="12.2" cy="5" r="3.7" fill="#b4b4b4" stroke="#8c8c8c" stroke-width=".8"/><path d="M11.6 4.4 L14.4 0.2 L17 3 L13 6.2 Z" fill="#f0f0f0"/><path d="M2.4 14.3 L8.2 9.3" stroke="#5e90e0" stroke-width="4.8" stroke-linecap="round"/><path d="M2.6 14.1 L8 9.5" stroke="#9dc0f4" stroke-width="2" stroke-linecap="round"/></svg><span>Настройки...</span><em>Alt+Enter</em></div></div>
<div class="abs" style="left:454px;top:559px;width:183px;height:37px;border:5px solid #fe0000;border-radius:11px;z-index:11"></div>
</body></html>
